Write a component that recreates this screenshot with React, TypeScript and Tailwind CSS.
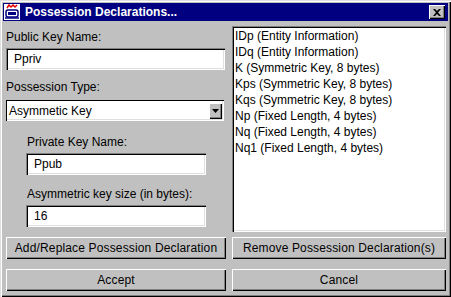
import type { ReactNode } from 'react'

const items = [
  'IDp (Entity Information)',
  'IDq (Entity Information)',
  'K (Symmetric Key, 8 bytes)',
  'Kps (Symmetric Key, 8 bytes)',
  'Kqs (Symmetric Key, 8 bytes)',
  'Np (Fixed Length, 4 bytes)',
  'Nq (Fixed Length, 4 bytes)',
  'Nq1 (Fixed Length, 4 bytes)',
]

// sunken white field, win95 style
function Field({ value, className = '' }: { value: string; className?: string }) {
  return (
    <div
      className={`h-[22px] bg-white flex items-center pl-[8px] shadow-[inset_1px_1px_#808080,inset_2px_2px_#000,inset_-1px_-1px_#fff,inset_-2px_-2px_#dfdfdf] ${className}`}
    >
      {value}
    </div>
  )
}

function Button({ children }: { children: ReactNode }) {
  return (
    <div className="h-[22px] flex items-center justify-center bg-[#c0c0c0] tracking-[0.15px] shadow-[inset_1px_1px_#fff,inset_-1px_-1px_#000,inset_-2px_-2px_#808080]">
      {children}
    </div>
  )
}

function TitleIcon() {
  return (
    <svg width="16" height="16" viewBox="0 0 16 16">
      <rect x="0" y="0" width="16" height="16" fill="#fff" />
      <path d="M3 4 L5 1 L7 3 L9 1 L11 3 L13 1" stroke="#e00000" strokeWidth="1.5" fill="none" />
      <rect x="2" y="6" width="12" height="7" rx="2" fill="none" stroke="#000080" strokeWidth="1.5" />
      <rect x="4" y="8" width="8" height="3" fill="#000080" />
      <path d="M1 14 H15" stroke="#000080" strokeWidth="1.5" />
    </svg>
  )
}

export default function App() {
  return (
    <div
      className="w-[451px] h-[297px] bg-[#c0c0c0] p-[3px] flex flex-col text-[12px] text-black shadow-[inset_1px_1px_#dfdfdf,inset_2px_2px_#fff,inset_-1px_-1px_#000,inset_-2px_-2px_#808080]"
      style={{ fontFamily: '"Liberation Sans", Arial, sans-serif' }}
    >
      {/* title bar */}
      <div className="h-[18px] bg-[#000080] flex items-center pl-px pr-[3px] shrink-0">
        <TitleIcon />
        <span className="ml-[5px] text-white font-bold text-[12px]">
          Possession Declarations...
        </span>
        <div className="ml-auto w-[16px] h-[14px] bg-[#c0c0c0] flex items-center justify-center shadow-[inset_1px_1px_#fff,inset_-1px_-1px_#000,inset_-2px_-2px_#808080]">
          <svg width="8" height="7" viewBox="0 0 8 7">
            <path d="M0 0h2l2 2 2-2h2L5 3.5 8 7H6L4 5 2 7H0l3-3.5z" fill="#000" />
          </svg>
        </div>
      </div>

      <div className="grid grid-cols-[220px_214px] gap-x-[6px] pl-[3px] mt-[1px]">
        {/* left form */}
        <div className="flex flex-col">
          <div className="mt-[7px] leading-[16px]">Public Key Name:</div>
          <Field value="Ppriv" className="mt-[3px] w-[219px]" />
          <div className="mt-[9px] leading-[16px]">Possession Type:</div>
          <div className="mt-[5px] h-[21px] w-[218px] bg-white flex items-center pl-[3px] pr-[2px] shadow-[inset_1px_1px_#000,inset_-1px_-1px_#fff,inset_-2px_-2px_#dfdfdf]">
            <span>Asymmetic Key</span>
            <div className="ml-auto w-[13px] h-[16px] bg-[#c0c0c0] flex items-center justify-center shadow-[inset_1px_1px_#fff,inset_-1px_-1px_#000,inset_-2px_-2px_#808080]">
              <svg width="7" height="4" viewBox="0 0 7 4">
                <path d="M0 0h7L3.5 4z" fill="#000" />
              </svg>
            </div>
          </div>
          <div className="pl-[20px] flex flex-col">
            <div className="mt-[13px] leading-[16px] pl-px">Private Key Name:</div>
            <Field value="Ppub" className="mt-[3px] w-[180px]" />
            <div className="mt-[11px] leading-[16px] pl-px">Asymmetric key size (in bytes):</div>
            <Field value="16" className="mt-[3px] w-[180px]" />
          </div>
        </div>

        {/* declarations list */}
        <div className="mt-[4px] h-[206px] bg-white p-[2px] pl-[3px] shadow-[inset_1px_1px_#808080,inset_2px_2px_#000,inset_-1px_-1px_#fff,inset_-2px_-2px_#dfdfdf]">
          {items.map((it) => (
            <div key={it} className="leading-[16px] whitespace-nowrap">
              {it}
            </div>
          ))}
        </div>

        <div className="mt-[5px]">
          <Button>Add/Replace Possession Declaration</Button>
        </div>
        <div className="mt-[5px]">
          <Button>Remove Possession Declaration(s)</Button>
        </div>
        <div className="mt-[10px]">
          <Button>Accept</Button>
        </div>
        <div className="mt-[10px]">
          <Button>Cancel</Button>
        </div>
      </div>
    </div>
  )
}
